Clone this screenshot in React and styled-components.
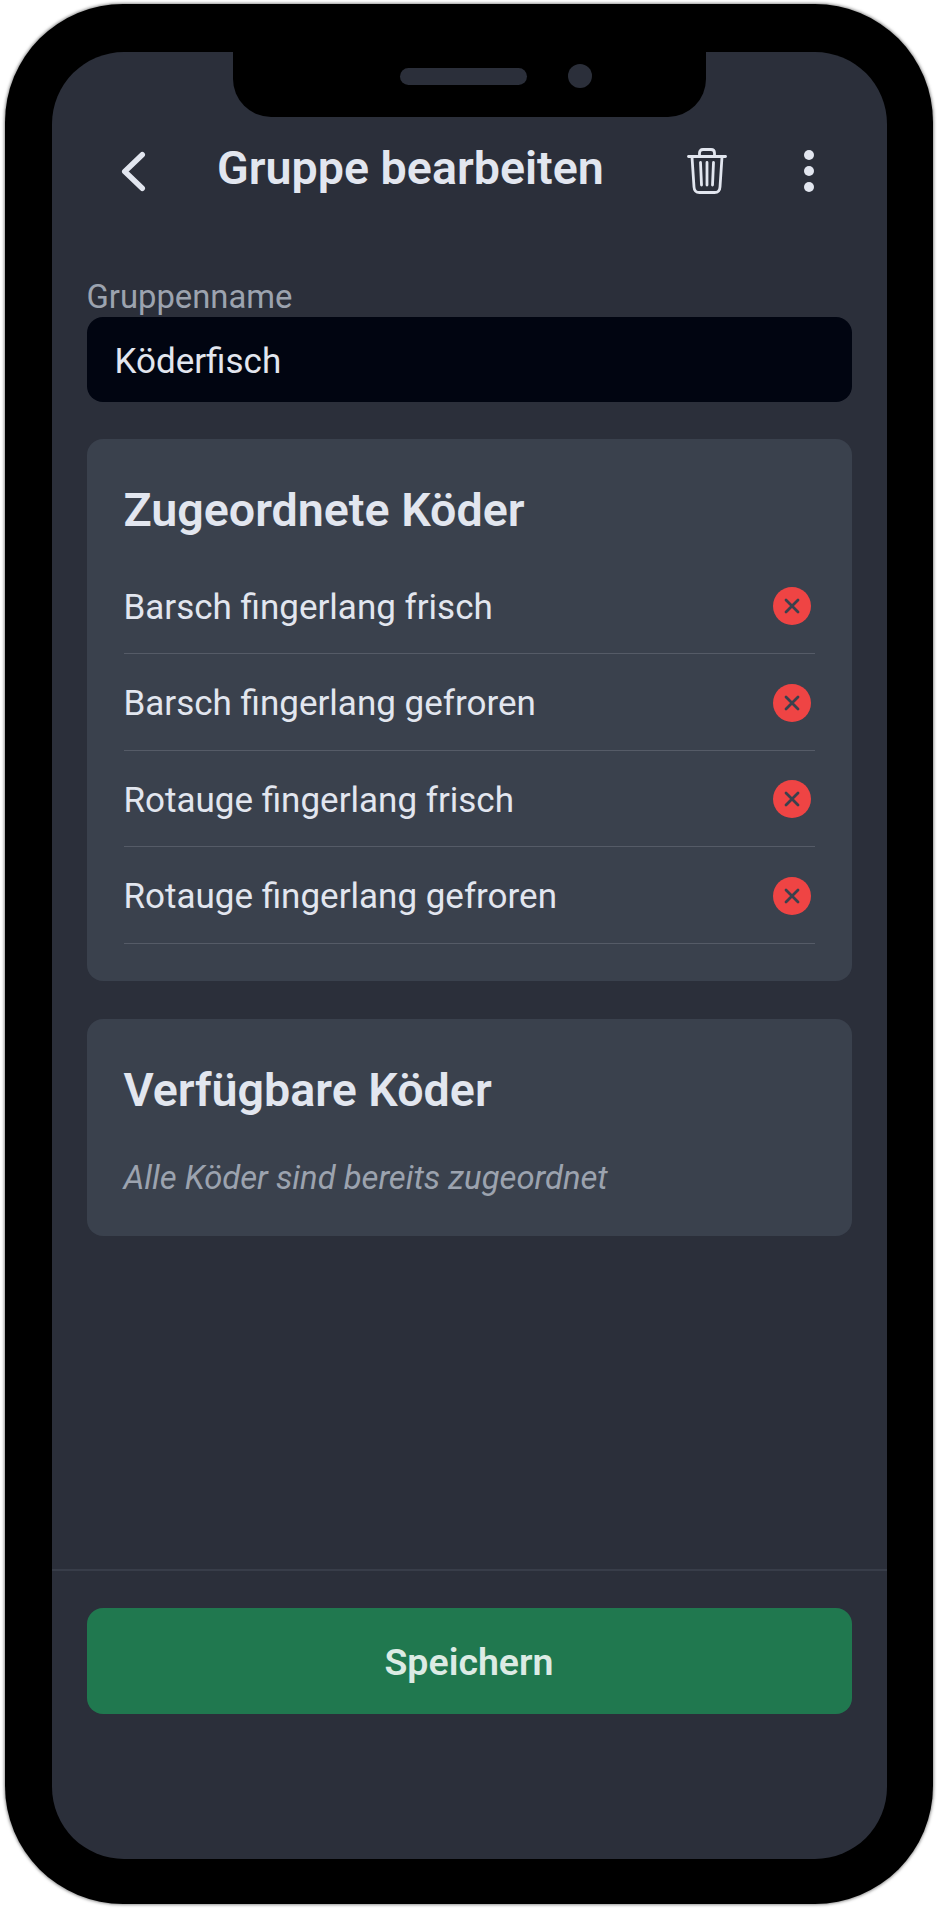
import React from 'react';
import styled, { createGlobalStyle } from 'styled-components';

const GlobalStyle = createGlobalStyle`
  html, body {
    margin: 0;
    padding: 0;
    background: #ffffff;
    font-family: Roboto, "Liberation Sans", sans-serif;
  }
`;

const Page = styled.div`
  width: 938px;
  height: 1909px;
  box-sizing: border-box;
  padding: 4px 5px 5px;
`;

const Phone = styled.div`
  position: relative;
  height: 100%;
  box-sizing: border-box;
  padding: 48px 46px 45px 47px;
  background: #000000;
  border-radius: 118px;
  box-shadow: 0 0 3px 1px rgba(90, 90, 90, 0.65);
`;

const Notch = styled.div`
  position: absolute;
  top: 48px;
  left: 228px;
  width: 473px;
  height: 65px;
  display: flex;
  align-items: flex-start;
  justify-content: center;
  background: #000000;
  border-radius: 0 0 38px 38px;
`;

const Speaker = styled.div`
  position: absolute;
  top: 16px;
  left: 167px;
  width: 127px;
  height: 17px;
  background: #2b2f3a;
  border-radius: 9px;
`;

const Camera = styled.div`
  position: absolute;
  top: 12px;
  left: 335px;
  width: 24px;
  height: 24px;
  background: #2b2f3a;
  border-radius: 50%;
`;

const Screen = styled.div`
  height: 100%;
  display: flex;
  flex-direction: column;
  background: #2b2f3a;
  border-radius: 72px;
`;

const Header = styled.header`
  height: 172px;
  padding-top: 91px;
  box-sizing: border-box;
  display: flex;
  align-items: flex-start;
  color: #e2e6ef;
`;

const BackButton = styled.div`
  margin: 8px 0 0 68px;
  width: 97px;
  height: 42px;
`;

const Title = styled.h1`
  margin: 0;
  width: 470px;
  font-size: 46.6px;
  line-height: 50px;
  font-weight: 600;
  color: #e2e6ef;
  white-space: nowrap;
`;

const TrashButton = styled.div`
  margin-top: 5px;
  width: 116px;
  height: 46px;
`;

const DotsButton = styled.div`
  margin-top: 6px;
  width: 12px;
  height: 44px;
`;

const Content = styled.main`
  flex: 1;
  display: flex;
  flex-direction: column;
  padding: 0 35.5px 0 34.5px;
`;

const Label = styled.label`
  margin-top: 54px;
  font-size: 32.8px;
  line-height: 39px;
  color: #9ca3af;
`;

const NameField = styled.div`
  height: 85px;
  box-sizing: border-box;
  padding: 4px 0 0 28px;
  display: flex;
  align-items: center;
  background: #010511;
  border-radius: 16px;
  font-size: 35px;
  color: #e2e6ef;
`;

const Card = styled.section`
  margin-top: ${(props) => props.$top}px;
  padding: ${(props) => props.$padding};
  background: #3a414d;
  border-radius: 16px;
`;

const CardTitle = styled.h2`
  margin: 0;
  font-size: 46.6px;
  line-height: 50px;
  font-weight: 600;
  color: #e2e6ef;
`;

const List = styled.ul`
  list-style: none;
  margin: 22.5px 0 0;
  padding: 0;
`;

const Row = styled.li`
  height: 96.5px;
  box-sizing: border-box;
  padding-top: 4px;
  display: flex;
  align-items: center;
  justify-content: space-between;
  border-bottom: 1px solid #555b67;
  font-size: 35px;
  color: #e2e6ef;
`;

const RemoveButton = styled.div`
  width: 38px;
  height: 38px;
  margin: -2px 4px 0 0;
  display: flex;
  align-items: center;
  justify-content: center;
  background: #ef4444;
  border-radius: 50%;
`;

const EmptyNote = styled.p`
  margin: 44px 0 0;
  font-size: 32.8px;
  line-height: 38px;
  font-style: italic;
  color: #9ca3af;
`;

const Footer = styled.footer`
  height: 290px;
  box-sizing: border-box;
  padding: 37px 35.5px 0 34.5px;
  border-top: 2px solid #383d49;
`;

const SaveButton = styled.div`
  height: 106px;
  box-sizing: border-box;
  padding-top: 2px;
  display: flex;
  align-items: center;
  justify-content: center;
  background: #20784f;
  border-radius: 16px;
  font-size: 37.5px;
  font-weight: 600;
  color: #dcebe4;
`;

const BackIcon = () => (
  <svg width="28" height="42" viewBox="0 0 28 42" fill="none">
    <path d="M22.25 3.75 L4.75 20.5 L22.25 37.25" stroke="#e2e6ef" strokeWidth="5.5" strokeLinecap="round" strokeLinejoin="round" />
  </svg>
);

const TrashIcon = () => (
  <svg width="40" height="46" viewBox="0 0 40 46" fill="none" stroke="#e2e6ef" strokeWidth="2.8" strokeLinecap="round" strokeLinejoin="round">
    <path d="M1.5 8.5 H38.5" />
    <path d="M12.5 8 V5 Q12.5 1.5 16 1.5 H24 Q27.5 1.5 27.5 5 V8" />
    <path d="M5 9 L7 39 Q7.3 44.5 12.5 44.5 H27.5 Q32.7 44.5 33 39 L35 9" />
    <path d="M13.5 14.5 L14.5 37 M20 14.5 V37 M26.5 14.5 L25.5 37" />
  </svg>
);

const DotsIcon = () => (
  <svg width="12" height="44" viewBox="0 0 12 44" fill="#e2e6ef">
    <circle cx="6" cy="6" r="5" />
    <circle cx="6" cy="22" r="5" />
    <circle cx="6" cy="38" r="5" />
  </svg>
);

const CloseIcon = () => (
  <svg width="18" height="18" viewBox="0 0 18 18" fill="none">
    <path d="M3 3 L15 15 M15 3 L3 15" stroke="#3a414d" strokeWidth="2.8" strokeLinecap="round" />
  </svg>
);

const assigned = [
  'Barsch fingerlang frisch',
  'Barsch fingerlang gefroren',
  'Rotauge fingerlang frisch',
  'Rotauge fingerlang gefroren',
];

export default function App() {
  return (
    <Page>
      <GlobalStyle />
      <Phone>
        <Screen>
          <Header>
            <BackButton><BackIcon /></BackButton>
            <Title>Gruppe bearbeiten</Title>
            <TrashButton><TrashIcon /></TrashButton>
            <DotsButton><DotsIcon /></DotsButton>
          </Header>
          <Content>
            <Label>Gruppenname</Label>
            <NameField>Köderfisch</NameField>
            <Card $top={37} $padding="46px 37px 37px">
              <CardTitle>Zugeordnete Köder</CardTitle>
              <List>
                {assigned.map((name) => (
                  <Row key={name}>
                    {name}
                    <RemoveButton><CloseIcon /></RemoveButton>
                  </Row>
                ))}
              </List>
            </Card>
            <Card $top={38} $padding="46px 37px 39px">
              <CardTitle>Verfügbare Köder</CardTitle>
              <EmptyNote>Alle Köder sind bereits zugeordnet</EmptyNote>
            </Card>
          </Content>
          <Footer>
            <SaveButton>Speichern</SaveButton>
          </Footer>
        </Screen>
        <Notch>
          <Speaker />
          <Camera />
        </Notch>
      </Phone>
    </Page>
  );
}
